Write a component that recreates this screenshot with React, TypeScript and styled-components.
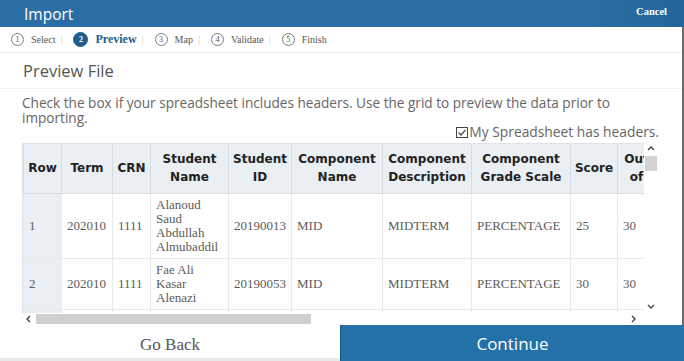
import React from 'react';
import styled, { createGlobalStyle } from 'styled-components';

const Global = createGlobalStyle`
  html, body { margin: 0; padding: 0; background: #fff; }
  body { width: 684px; height: 361px; overflow: hidden; }
  * { box-sizing: border-box; }
`;

const Page = styled.div`
  width: 684px;
  height: 361px;
  display: flex;
  flex-direction: column;
  background: #fff;
  overflow: hidden;
`;

const TopBar = styled.header`
  height: 27px;
  flex: none;
  background: linear-gradient(to right, #2a6ea5 0%, #2a6ea5 86%, #23659a 100%);
  display: flex;
  align-items: center;
  justify-content: space-between;
  padding: 0 17px 0 24px;
`;

const Title = styled.h1`
  margin: 0;
  font: 400 15.5px 'Open Sans', sans-serif;
  line-height: 20px;
  color: #fff;
`;

const Cancel = styled.button`
  background: none;
  border: 0;
  padding: 0;
  margin-top: -4px;
  color: #fff;
  font: 700 10.5px 'Liberation Serif', serif;
`;

const Main = styled.div`
  flex: 1;
  min-height: 0;
  display: flex;
  flex-direction: column;
  border-right: 2px solid #6b6b6b;
  overflow: hidden;
`;

const Stepper = styled.nav`
  height: 26px;
  flex: none;
  display: flex;
  align-items: center;
  padding-left: 11px;
  border-bottom: 1px solid #ededed;
`;

const Step = styled.div`
  display: flex;
  align-items: center;
  gap: 7px;
`;

const Circle = styled.span<{ $active?: boolean }>`
  width: ${(p) => (p.$active ? 15 : 13)}px;
  height: ${(p) => (p.$active ? 15 : 13)}px;
  border-radius: 50%;
  border: 1px solid ${(p) => (p.$active ? '#1f5c8f' : '#7a7a7a')};
  background: ${(p) => (p.$active ? '#1f5c8f' : '#fff')};
  color: ${(p) => (p.$active ? '#fff' : '#555')};
  font: ${(p) => (p.$active ? 700 : 400)} 8px 'Liberation Serif', serif;
  display: flex;
  align-items: center;
  justify-content: center;
`;

const StepLabel = styled.span<{ $active?: boolean }>`
  font: ${(p) => (p.$active ? '700 12px' : '400 10px')} 'Liberation Serif', serif;
  color: ${(p) => (p.$active ? '#1f5c8f' : '#555')};
`;

const Sep = styled.span`
  color: #cfcfcf;
  font: 400 10px 'Liberation Serif', serif;
  margin: 0 11px 0 5px;
`;

const SectionHead = styled.div`
  height: 36px;
  flex: none;
  display: flex;
  align-items: center;
  padding-left: 23px;
  border-bottom: 1px solid #eeeeee;
`;

const SectionTitle = styled.h2`
  margin: 0;
  font: 400 16.5px 'Open Sans', sans-serif;
  line-height: 20px;
  color: #555;
`;

const Body = styled.div`
  flex: 1;
  min-height: 0;
  display: flex;
  flex-direction: column;
  padding: 6px 23px 0 22px;
`;

const Desc = styled.p`
  margin: 0;
  font: 400 13.6px 'Open Sans', sans-serif;
  line-height: 15px;
  color: #666;
`;

const CheckRow = styled.label`
  display: flex;
  justify-content: flex-end;
  align-items: center;
  height: 14px;
  font: 400 13.8px 'Open Sans', sans-serif;
  line-height: 14px;
  color: #666;
`;

const Grid = styled.div`
  margin-top: 4px;
  display: grid;
  grid-template-columns: 622px 14px;
  grid-template-rows: 170px 12px;
`;

const Viewport = styled.div`
  overflow: hidden;
  border-top: 1px solid #dde3e8;
  border-left: 1px solid #dde3e8;
`;

const Table = styled.table`
  border-collapse: collapse;
  table-layout: fixed;
  width: 632px;
`;

const Th = styled.th`
  height: 49px;
  padding: 0 3px;
  background: #e9eff3;
  border: 1px solid #d5dde3;
  border-top: 0;
  font: 700 12px 'DejaVu Sans', sans-serif;
  line-height: 18px;
  color: #222;
  text-align: center;
  vertical-align: middle;
`;

const Td = styled.td<{ $head?: boolean }>`
  padding: 4px 5px;
  background: ${(p) => (p.$head ? '#e9eff3' : '#fff')};
  border: 1px solid #e7eaed;
  font: 400 13px 'Liberation Serif', serif;
  line-height: 14px;
  color: #5b5b5b;
  vertical-align: middle;
`;

const VBar = styled.div`
  display: flex;
  flex-direction: column;
  align-items: center;
  padding: 3px 0 4px;
`;

const VThumb = styled.div`
  width: 12px;
  height: 15px;
  margin-top: 5px;
  background: #d3d3d3;
`;

const Spacer = styled.div`
  flex: 1;
`;

const HBar = styled.div`
  display: flex;
  align-items: center;
  padding: 0 8px 0 4px;
`;

const HThumb = styled.div`
  width: 275px;
  height: 10px;
  margin-left: 5px;
  background: #cfcfcf;
`;

const Footer = styled.footer`
  height: 36px;
  flex: none;
  display: grid;
  grid-template-columns: 340px 1fr;
`;

const BackBtn = styled.button`
  border: 0;
  border-bottom: 3px solid #e9e9e9;
  background: #fff;
  font: 400 17px 'Liberation Serif', serif;
  line-height: 20px;
  color: #555;
  padding: 6px 0 0;
`;

const ContinueBtn = styled.button`
  border: 0;
  border-left: 1px solid #1b5683;
  background: #2470a8;
  font: 400 17px 'Open Sans', sans-serif;
  line-height: 20px;
  color: #fff;
  padding: 2px 0 0;
`;

const Chev = ({ dir }: { dir: 'up' | 'down' | 'left' | 'right' }) => {
  const d = {
    up: 'M1 4 L4 1 L7 4',
    down: 'M1 1 L4 4 L7 1',
    left: 'M4 1 L1 4 L4 7',
    right: 'M1 1 L4 4 L1 7',
  }[dir];
  const vert = dir === 'up' || dir === 'down';
  return (
    <svg width={vert ? 8 : 5} height={vert ? 5 : 8} viewBox={vert ? '0 0 8 5' : '0 0 5 8'}>
      <path d={d} fill="none" stroke="#444" strokeWidth="1.4" />
    </svg>
  );
};

const CheckIcon = () => (
  <svg width="12" height="11" viewBox="0 0 12 11" style={{ marginRight: 1 }}>
    <rect x="0.5" y="0.5" width="11" height="10" fill="#fff" stroke="#444" />
    <path d="M2.5 5.5 L5 8 L9.5 2.8" fill="none" stroke="#444" strokeWidth="1.2" />
  </svg>
);

const steps = [
  { n: 1, label: 'Select' },
  { n: 2, label: 'Preview', active: true },
  { n: 3, label: 'Map' },
  { n: 4, label: 'Validate' },
  { n: 5, label: 'Finish' },
];

const cols = [
  { h: 'Row', w: 38 },
  { h: 'Term', w: 51 },
  { h: 'CRN', w: 38 },
  { h: 'Student Name', w: 78 },
  { h: 'Student ID', w: 63 },
  { h: 'Component Name', w: 91 },
  { h: 'Component Description', w: 89 },
  { h: 'Component Grade Scale', w: 99 },
  { h: 'Score', w: 47 },
  { h: 'Out of', w: 38 },
];

const rows = [
  ['1', '202010', '1111', 'Alanoud Saud Abdullah Almubaddil', '20190013', 'MID', 'MIDTERM', 'PERCENTAGE', '25', '30'],
  ['2', '202010', '1111', 'Fae Ali Kasar Alenazi', '20190053', 'MID', 'MIDTERM', 'PERCENTAGE', '30', '30'],
  ['3', '202010', '1111', 'Amal Saad Alharbi', '20190061', 'MID', 'MIDTERM', 'PERCENTAGE', '28', '30'],
];

export default function App() {
  return (
    <Page>
      <Global />
      <TopBar>
        <Title>Import</Title>
        <Cancel>Cancel</Cancel>
      </TopBar>
      <Main>
        <Stepper>
          {steps.map((s, i) => (
            <React.Fragment key={s.n}>
              <Step>
                <Circle $active={s.active}>{s.n}</Circle>
                <StepLabel $active={s.active}>{s.label}</StepLabel>
              </Step>
              {i < steps.length - 1 && <Sep>|</Sep>}
            </React.Fragment>
          ))}
        </Stepper>
        <SectionHead>
          <SectionTitle>Preview File</SectionTitle>
        </SectionHead>
        <Body>
          <Desc>
            Check the box if your spreadsheet includes headers. Use the grid to preview the data prior to
            importing.
          </Desc>
          <CheckRow>
            <CheckIcon />
            My Spreadsheet has headers.
          </CheckRow>
          <Grid>
            <Viewport>
              <Table>
                <colgroup>
                  {cols.map((c) => (
                    <col key={c.h} style={{ width: c.w }} />
                  ))}
                </colgroup>
                <thead>
                  <tr>
                    {cols.map((c) => (
                      <Th key={c.h}>{c.h}</Th>
                    ))}
                  </tr>
                </thead>
                <tbody>
                  {rows.map((r) => (
                    <tr key={r[0]}>
                      {r.map((v, i) => (
                        <Td key={i} $head={i === 0}>
                          {v}
                        </Td>
                      ))}
                    </tr>
                  ))}
                </tbody>
              </Table>
            </Viewport>
            <VBar>
              <Chev dir="up" />
              <VThumb />
              <Spacer />
              <Chev dir="down" />
            </VBar>
            <HBar>
              <Chev dir="left" />
              <HThumb />
              <Spacer />
              <Chev dir="right" />
            </HBar>
            <div />
          </Grid>
        </Body>
      </Main>
      <Footer>
        <BackBtn>Go Back</BackBtn>
        <ContinueBtn>Continue</ContinueBtn>
      </Footer>
    </Page>
  );
}
